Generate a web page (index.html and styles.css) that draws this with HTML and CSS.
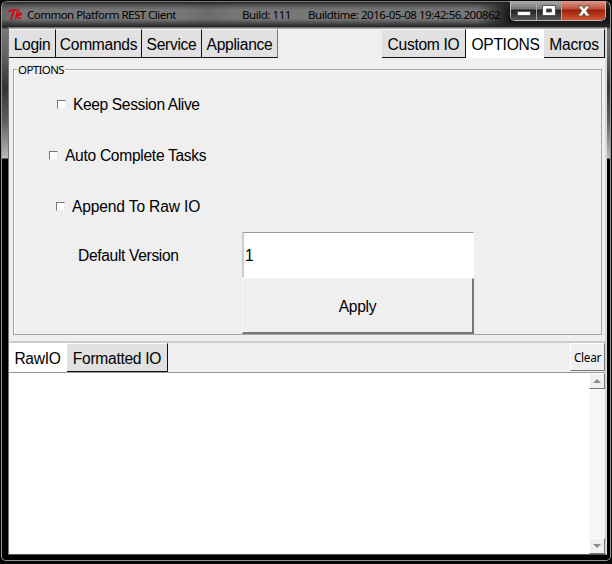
FILE: index.html
```html
<!DOCTYPE html>
<html lang="en">
<head>
<meta charset="utf-8">
<title>Common Platform REST Client</title>
<link rel="stylesheet" href="styles.css">
</head>
<body>
<div class="window">
  <header class="titlebar">
    <svg class="logo" width="15" height="12" viewBox="0 0 15 12" fill="none" stroke="#e3000b" stroke-linecap="round">
      <path d="M1 2.2C3 .8 5 1.4 8 .9M5.8 1.5C4.8 4 4.2 7 3.2 10" stroke-width="1.8"/>
      <path d="M10.7.8C9 3 8.2 7 7.5 9.8M9.2 6.4c1.2-2.4 4-2.8 3.9-1.3-.1 1.2-2 1.8-3.9 1.3.1 2.2 1.2 3.7 3.6 2.6" stroke-width="1.4"/>
    </svg>
    <span class="title name">Common Platform REST Client</span>
    <span class="title build">Build: 111</span>
    <span class="title time">Buildtime: 2016-05-08 19:42:56.200862</span>
    <div class="controls">
      <span class="control minimize"><svg width="14" height="6"><rect x=".5" y=".5" width="13" height="4" fill="#fff" stroke="#555"/></svg></span>
      <span class="control maximize"><svg width="14" height="11"><path d="M.5.5h13v10H.5zM4.5 4v3h5V4z" fill="#fff" fill-rule="evenodd" stroke="#555"/></svg></span>
      <span class="control close"><svg width="14" height="12" viewBox="0 0 14 12"><path d="M1 1h4l2 2.5L9 1h4L9.3 5.8 13 11H9L7 8.2 5 11H1l3.7-5.2z" fill="#fff" stroke="#664"/></svg></span>
    </div>
  </header>
  <main class="client">
    <section class="upper">
      <nav class="tabs">
        <span class="tab login">Login</span><span class="tab commands">Commands</span><span class="tab service">Service</span><span class="tab appliance">Appliance</span>
        <span class="tab custom">Custom IO</span><span class="tab options active">OPTIONS</span><span class="tab macros">Macros</span>
      </nav>
      <div class="group">
        <div class="legend"><span>OPTIONS</span></div>
        <div class="group-body">
          <label class="check keep"><i class="box"></i><span>Keep Session Alive</span></label>
          <label class="check auto"><i class="box"></i><span>Auto Complete Tasks</span></label>
          <label class="check append"><i class="box"></i><span>Append To Raw IO</span></label>
          <div class="version">
            <span class="version-label">Default Version</span>
            <div class="version-form">
              <div class="entry">1</div>
              <div class="apply">Apply</div>
            </div>
          </div>
        </div>
      </div>
    </section>
    <section class="lower">
      <nav class="tabs">
        <span class="tab raw active">RawIO</span><span class="tab formatted">Formatted IO</span>
        <span class="clear">Clear</span>
      </nav>
      <div class="output">
        <div class="scrollbar">
          <span class="arrow"><svg width="8" height="4"><path d="M0 4l4-4 4 4z" fill="#8b8b8b"/></svg></span>
          <span class="arrow"><svg width="8" height="4"><path d="M0 0l4 4 4-4z" fill="#8b8b8b"/></svg></span>
        </div>
      </div>
    </section>
  </main>
</div>
</body>
</html>
```
FILE: styles.css
```css
* { box-sizing: border-box; }
body { margin: 0; width: 612px; height: 564px; overflow: hidden; background: #090606; color: #000; font: 15.6px/20px "Liberation Sans", Arial, sans-serif; letter-spacing: -.3px; white-space: nowrap; }
svg { display: block; }
.window { margin-left: 1px; width: 610px; height: 560px; padding: 0 4px 5px 6px; border: 1px solid #969696; border-top-color: #777; border-radius: 6px 6px 5px 5px; background: linear-gradient(#222 0, #737373 5px, #656565 22px, #343434 26px, #777 27px, #666 50px, #333 85px, #606060 120px, #bbb 156px, #000 157px); position: relative; top: 1px; }
.titlebar { display: flex; height: 25px; margin: 0 -4px 0 -6px; padding-left: 6px; border-radius: 6px 6px 0 0; background: linear-gradient(#222 0, #3338 3px, transparent 8px, transparent 17px, #222 25px), linear-gradient(90deg, #666 0, #777 20px, #777 180px, #6b6b6b 205px, #777 235px, #777 475px, #151515 508px); }
.logo { margin: 7px 4px 0 0; }
.title { flex: none; font: 11.5px/25px "Noto Sans", sans-serif; letter-spacing: -.52px; }
.name { width: 215px; }
.build { width: 66px; letter-spacing: -.45px; }
.time { width: 201px; letter-spacing: -.46px; }
.controls { display: flex; height: 20px; width: 96px; margin-left: auto; margin-right: 4px; margin-top: -1px; border: 1px solid #bbb; border-top: 0; border-radius: 0 0 5px 5px; overflow: hidden; }
.control { flex: none; display: flex; align-items: center; justify-content: center; width: 26px; background: linear-gradient(#aaa, #777 8px, #222 9px, #555); border-right: 1px solid #aaa; }
.minimize { padding-top: 7px; }
.maximize { width: 25px; }
.close { width: 43px; border: 0; background: linear-gradient(#d99b8e, #c0513d 8px, #9c1d09 9px, #d25635); }
.client { width: 599px; height: 528px; background: #efefef; border: 1px solid #777; border-right-color: #ddd; border-bottom-color: #555; }
.upper { height: 313px; border-top: 1px solid #aaa; border-right: 1px solid #d4d4d4; padding: 0 4px 0 0; }
.tabs { display: flex; height: 29px; }
.tab { flex: none; height: 29px; padding-top: 5px; text-align: center; background: #e1e1e1; border: solid #111; border-width: 1px 1px 1px 0; border-top-color: #f8f8f8; }
.active { background: #fff; border-color: #fff; }
.login { width: 47px; }
.commands { width: 86px; }
.service { width: 60px; }
.appliance { width: 76px; border-right-color: #777; }
.custom { width: 84px; margin-left: 104px; }
.options { width: 78px; padding-left: 2px; }
.macros { width: 61px; }
.upper .tabs { margin-right: -4px; }
.group { position: relative; height: 266px; width: 589px; margin: 11px 0 0 4px; border: 1px solid #a5a5a5; box-shadow: inset 1px 1px #fff; }
.legend { position: absolute; left: 3px; top: -9px; padding: 0 1px; background: #efefef; font: 11.5px/17px "Noto Sans", sans-serif; letter-spacing: -.6px; }
.group-body { padding-top: 24px; }
.check { display: flex; align-items: center; height: 20px; margin-bottom: 31px; }
.check span { position: relative; top: 1px; }
.box { width: 9px; height: 9px; background: #fff; border: 1px solid #eee; border-top-color: #777; border-left-color: #777; margin-right: 7px; }
.keep { padding-left: 43px; }
.keep span { letter-spacing: -.38px; }
.auto { padding-left: 35px; }
.append { padding-left: 42px; margin-bottom: 16px; }
.append span { letter-spacing: -.15px; }
.version { display: flex; }
.version-label { width: 164px; padding-top: 14px; margin-left: 64px; letter-spacing: -.34px; }
.version-form { width: 232px; }
.entry { height: 46px; padding: 13px 1px; background: #fff; border: 1px solid #fff; border-left: 2px solid #ccc; border-top-color: #999; }
.apply { height: 56px; padding-top: 18px; text-align: center; border: 1px solid #f7f7f7; border-right: 2px solid #777; border-bottom: 2px solid #777; }
.lower { height: 213px; border-top: 2px solid #ccc; border-right: 1px solid #ccc; }
.lower .tabs { height: 29px; }
.lower .tab { height: 29px; }
.lower .raw { width: 58px; }
.formatted { width: 101px; }
.clear { width: 35px; height: 28px; margin-left: auto; border: 1px solid #fff; border-right-color: #777; border-bottom-color: #777; text-align: center; font: 11.8px/26px "Noto Sans", sans-serif; letter-spacing: -.3px; }
.output { display: flex; justify-content: flex-end; height: 182px; background: #fff; border-top: 1px solid #999; }
.scrollbar { display: flex; flex-direction: column; justify-content: space-between; width: 16px; background: #f6f6f6; }
.arrow { display: flex; align-items: center; justify-content: center; width: 16px; height: 16px; background: #efefef; border: 1px solid #fff; border-right-color: #777; border-bottom-color: #777; }
```
